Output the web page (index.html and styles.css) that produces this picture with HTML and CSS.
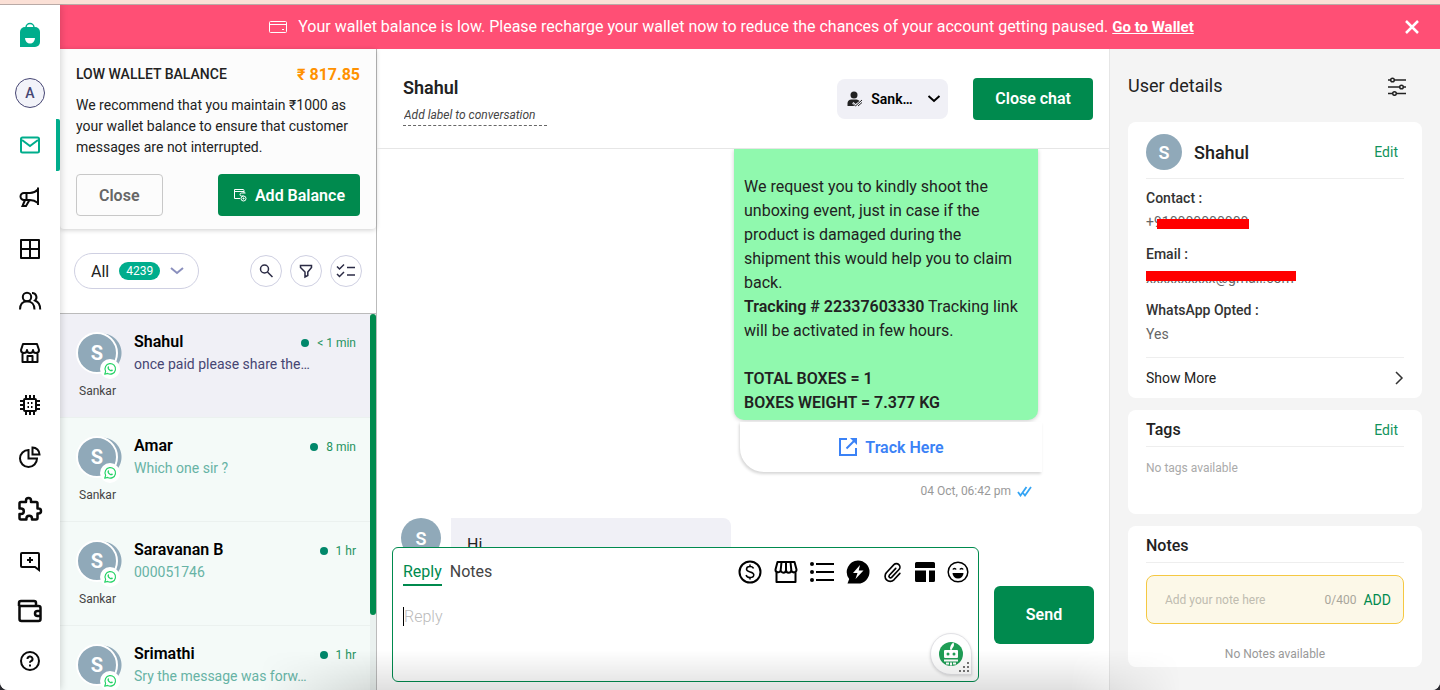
FILE: index.html
```
<!DOCTYPE html>
<html lang="en">
<head>
  <meta charset="UTF-8">
  <meta name="viewport" content="width=device-width, initial-scale=1.0">
  <title>Inbox</title>
  <link rel="stylesheet" href="styles.css">
</head>
<body>
  <svg width="0" height="0" class="sprite" aria-hidden="true">
    <symbol id="whatsapp" viewBox="0 0 24 24">
      <path d="M3 21l1.500-5A9 9 0 1 1 8 19.600z" fill="none" stroke="#25d366" stroke-width="2" stroke-linejoin="round"/>
      <path d="M8.500 7.500c1-.9 1.500-.2 2 1.200.3.800-.9 1.300-.5 2 .9 1.500 1.800 2.300 3.300 3 .8.300 1.200-1.200 2-.8 1.700.8 2 1.100 1.200 2.200-1.200 1.500-3.500 1-5.700-.6-2.300-1.800-4.300-4.800-2.300-7z" fill="#25d366"/>
    </symbol>
  </svg>

  <div class="app">
    <nav class="rail">
      <a class="logo" href="#" aria-label="Home">
        <svg width="22" height="26" viewBox="0 0 22 26">
          <path d="M7 6.500V5.500a4 4 0 0 1 8 0v1" fill="none" stroke="#00ad8c" stroke-width="1.500"/>
          <path d="M1 25V10a5 5 0 0 1 5-5h10a5 5 0 0 1 5 5v10a5 5 0 0 1-5 5z" fill="#00ad8c"/>
          <path d="M6 16h10a5 5.500 0 0 1-10 0z" fill="#fff"/>
        </svg>
      </a>
      <button class="rail-item" aria-label="Account"><span class="account">A</span></button>
      <button class="rail-item active" aria-label="Inbox">
        <svg width="24" height="24" viewBox="0 0 24 24"><rect x="3" y="4.500" width="18" height="15" rx="1.500"/><path d="M4 7l8 6 8-6"/></svg>
      </button>
      <button class="rail-item" aria-label="Campaigns">
        <svg width="24" height="24" viewBox="0 0 24 24"><path d="M20 2.500v17.500M20 4.500c-2.500 2.500-5 3.500-8 3.500H6a2.500 2.500 0 0 0 0 7h6c3 0 5.500 1 8 3M8.500 8v7M7 15l-2.500 6h3.500l3.500-6"/></svg>
      </button>
      <button class="rail-item" aria-label="Dashboard">
        <svg width="24" height="24" viewBox="0 0 24 24"><path d="M3 3h18v18H3zM12 3v18M3 12h18" stroke-linejoin="round"/></svg>
      </button>
      <button class="rail-item" aria-label="Contacts">
        <svg width="24" height="24" viewBox="0 0 24 24"><circle cx="9" cy="8" r="4.200"/><path d="M2 20.500c0-5 2.500-8.300 7-8.300s7.500 3.300 7.500 8.300M14 4a4.300 4.300 0 0 1 3 7.500c3.200 1.200 5.200 4.500 5.200 9"/></svg>
      </button>
      <button class="rail-item" aria-label="Store">
        <svg width="24" height="24" viewBox="0 0 24 24"><path d="M5 3h14l2 6a3 3 0 0 1-6 0 3 3 0 0 1-6 0 3 3 0 0 1-6 0zM4.500 12v9h15v-9M9.500 21v-6h5v6" stroke-linejoin="round"/></svg>
      </button>
      <button class="rail-item" aria-label="Automation">
        <svg width="24" height="24" viewBox="0 0 24 24"><rect x="6" y="6" width="12" height="12" rx="1"/><path d="M8 2v4M12 2v4M8 18v4M12 18v4M16 2v4M16 18v4M2 8h4M2 12h4M2 16h4M18 8h4M18 12h4M18 16h4M9.500 10h1.500M13 10h1.500M9.500 14h1.500M13 14h1.500"/></svg>
      </button>
      <button class="rail-item" aria-label="Reports">
        <svg width="24" height="24" viewBox="0 0 24 24"><path d="M10.500 5a8.500 8.500 0 1 0 8.500 8.500h-8.500zM14.500 2.500v7h7a7 7 0 0 0-7-7z"/></svg>
      </button>
      <button class="rail-item" aria-label="Integrations">
        <svg width="26" height="26" viewBox="0 0 26 26" stroke-linejoin="round"><path class="thick" d="M4 6h5V4.500a2.500 2.500 0 0 1 5 0V6h5a1.500 1.500 0 0 1 1.500 1.500v5h1a2.500 2.500 0 0 1 0 5h-1V22a1.500 1.500 0 0 1-1.500 1.500h-4v-1a2.800 2.800 0 0 0-5.600 0v1H4A1.500 1.500 0 0 1 2.500 22v-4H4a2.800 2.800 0 0 0 0-5.600H2.500V7.500A1.500 1.500 0 0 1 4 6z"/></svg>
      </button>
      <button class="rail-item" aria-label="Feedback">
        <svg width="24" height="24" viewBox="0 0 24 24"><path d="M3 5a1 1 0 0 1 1-1h16a1 1 0 0 1 1 1v16l-4-3H4a1 1 0 0 1-1-1zM12 8v6M9 11h6"/></svg>
      </button>
      <button class="rail-item short" aria-label="Wallet">
        <svg width="26" height="26" viewBox="0 0 26 26"><path class="thick" d="M2 8V5a2 2 0 0 1 2-2h13a2 2 0 0 1 2 2v3M2.500 8v13a2 2 0 0 0 2 2h17a2 2 0 0 0 2-2V10a2 2 0 0 0-2-2H2.500M24 13h-3.500a2.500 2.500 0 0 0 0 5H24"/></svg>
      </button>
      <button class="rail-item" aria-label="Help">
        <svg width="24" height="24" viewBox="0 0 24 24"><circle cx="12" cy="12" r="9"/><path d="M9.500 10a2.500 2.500 0 1 1 3.500 2.200c-.8.400-1 .8-1 1.600M12 15.500v2"/></svg>
      </button>
    </nav>

    <div class="workspace">
      <div class="banner">
        <svg width="20" height="14" viewBox="0 0 20 14" fill="none" stroke="#fff"><rect x="1.500" y="1.500" width="17" height="11" rx="1"/><path d="M1.500 4.500h17M14 9.500h2"/></svg>
        <p>Your wallet balance is low. Please recharge your wallet now to reduce the chances of your account getting paused. <a href="#">Go to Wallet</a></p>
        <button class="banner-close" aria-label="Dismiss">
          <svg width="16" height="16" viewBox="0 0 16 16" stroke="#fff" stroke-width="2.500"><path d="M2 2l12 12M14 2L2 14"/></svg>
        </button>
      </div>

      <div class="panels">
        <aside class="inbox">
          <section class="wallet">
            <div class="wallet-head">
              <h2>LOW WALLET BALANCE</h2>
              <strong>₹ 817.85</strong>
            </div>
            <p>We recommend that you maintain ₹1000 as your wallet balance to ensure that customer messages are not interrupted.</p>
            <div class="wallet-actions">
              <button class="btn-outline">Close</button>
              <button class="btn">
                <svg width="14" height="14" viewBox="0 0 14 14" fill="none" stroke="#fff"><path d="M11 5V2.500a1 1 0 0 0-1-1H1.500v9H7M1.500 3.500H11M12.500 5H8.500a1.500 1.500 0 0 0 0 3h2"/><circle cx="10.500" cy="10.500" r="2.500"/><path d="M10.500 9.500v2M9.500 10.500h2"/></svg>
                Add Balance
              </button>
            </div>
          </section>

          <div class="filters">
            <button class="filter-pill">All <span class="count">4239</span>
              <svg width="14" height="8" viewBox="0 0 14 8" fill="none" stroke="#8a8fbd" stroke-width="2"><path d="M1 1l6 5 6-5"/></svg>
            </button>
            <div class="filter-tools">
              <button class="round" aria-label="Search">
                <svg width="16" height="16" viewBox="0 0 16 16"><circle cx="6.500" cy="6" r="4"/><path d="M9.500 9l5 5"/></svg>
              </button>
              <button class="round" aria-label="Filter">
                <svg width="16" height="16" viewBox="0 0 16 16"><path d="M2.500 2.500h11v2L9.800 9v3.500L7 14V9L2.500 4.500z"/></svg>
              </button>
              <button class="round" aria-label="Select chats">
                <svg width="20" height="16" viewBox="0 0 20 16"><path d="M1 3.500l2.500 2.500L8 1.500M1 11l2.500 2.500L8 9M11 4.500h8M11 12h8"/></svg>
              </button>
            </div>
          </div>

          <div class="list-wrap">
            <ul class="chat-list">
              <li class="chat-item selected">
                <div class="who">
                  <div class="face"><span>S</span><i><svg width="14" height="14"><use href="#whatsapp"/></svg></i></div>
                  <small>Sankar</small>
                </div>
                <div class="summary">
                  <h3>Shahul</h3>
                  <time>&lt; 1 min</time>
                  <p>once paid please share the…</p>
                </div>
              </li>
              <li class="chat-item">
                <div class="who">
                  <div class="face"><span>S</span><i><svg width="14" height="14"><use href="#whatsapp"/></svg></i></div>
                  <small>Sankar</small>
                </div>
                <div class="summary">
                  <h3>Amar</h3>
                  <time>8 min</time>
                  <p>Which one sir ?</p>
                </div>
              </li>
              <li class="chat-item">
                <div class="who">
                  <div class="face"><span>S</span><i><svg width="14" height="14"><use href="#whatsapp"/></svg></i></div>
                  <small>Sankar</small>
                </div>
                <div class="summary">
                  <h3>Saravanan B</h3>
                  <time>1 hr</time>
                  <p>000051746</p>
                </div>
              </li>
              <li class="chat-item">
                <div class="who">
                  <div class="face"><span>S</span><i><svg width="14" height="14"><use href="#whatsapp"/></svg></i></div>
                </div>
                <div class="summary">
                  <h3>Srimathi</h3>
                  <time>1 hr</time>
                  <p>Sry the message was forw…</p>
                </div>
              </li>
            </ul>
            <div class="scroll-track"><div class="scroll-thumb"></div></div>
          </div>
        </aside>

        <main class="chat">
          <header class="chat-head">
            <div class="chat-title">
              <h1>Shahul</h1>
              <input type="text" placeholder="Add label to conversation" aria-label="Conversation label">
            </div>
            <label class="assignee">
              <svg width="16" height="16" viewBox="0 0 16 16"><circle cx="7" cy="4" r="3.500" fill="#222"/><path d="M.5 15v-3a4 4 0 0 1 4-3.500h5a4 4 0 0 1 3 1.500l-4 3-2-2-1.500 1.500 2.500 2.500z" fill="#222"/><path d="M6 12.500l2.500 2.500 6.500-6M11 15l4-3.500" fill="none" stroke="#222"/></svg>
              <select aria-label="Assignee"><option>Sank…</option></select>
              <svg width="14" height="10" viewBox="0 0 14 10" fill="none" stroke="#000" stroke-width="2"><path d="M1.500 2L7 7l5.500-5"/></svg>
            </label>
            <button class="btn close-chat">Close chat</button>
          </header>

          <div class="messages">
            <div class="outgoing">
              <div class="bubble">
                <br>
                We request you to kindly shoot the unboxing event, just in case if the product is damaged during the shipment this would help you to claim back.<br>
                <b>Tracking # 22337603330</b> Tracking link will be activated in few hours.<br>
                <br>
                <b>TOTAL BOXES = 1<br>BOXES WEIGHT = 7.377 KG</b>
              </div>
              <a class="track" href="#">
                <svg width="20" height="20" viewBox="0 0 20 20" fill="none" stroke="#3b82f6" stroke-width="2"><path d="M9 2H2v16h16v-7M8.500 11.500l8-8"/><path d="M12 1h7v7z" fill="#3b82f6" stroke="none"/></svg>
                Track Here
              </a>
              <div class="stamp">04 Oct, 06:42 pm
                <svg width="15" height="12" viewBox="0 0 15 12" fill="none" stroke="#34a4f4" stroke-width="1.800"><path d="M1 7l2.500 3.500L9.500 2M6 8l2 2.500L14 2"/></svg>
              </div>
            </div>
            <div class="incoming">
              <span class="avatar">S</span>
              <div class="in-bubble">Hi</div>
            </div>
          </div>

          <div class="composer">
            <div class="editor">
              <div class="editor-bar">
                <button class="tab current">Reply</button>
                <button class="tab">Notes</button>
                <div class="tools">
                  <button aria-label="Payment">
                    <svg width="24" height="24" viewBox="0 0 24 24" fill="none" stroke="#000" stroke-width="2"><circle cx="12" cy="12" r="10.500"/><path d="M15.500 8.500c-.5-1.500-1.800-2-3.500-2-2 0-3.500 1-3.500 2.700 0 3.600 7.300 1.800 7.300 5.500 0 1.800-1.800 2.800-3.800 2.800s-3.500-.8-3.900-2.500M12 4.500v2.500M12 17v2.500" stroke-width="1.500"/></svg>
                  </button>
                  <button aria-label="Catalogue">
                    <svg width="24" height="24" viewBox="0 0 24 24" fill="none" stroke="#000" stroke-width="2" stroke-linejoin="round"><path d="M3.500 2h17l2 7.500a2.600 2.600 0 0 1-5.200.5 2.600 2.600 0 0 1-5.300 0 2.600 2.600 0 0 1-5.300 0 2.600 2.600 0 0 1-5.200-.5zM7.500 2l-.8 8M12 2v8M16.500 2l.8 8M2.500 12v10h19V12"/></svg>
                  </button>
                  <button aria-label="List">
                    <svg width="24" height="24" viewBox="0 0 24 24" fill="#000"><circle cx="2" cy="4" r="2"/><circle cx="2" cy="12" r="2"/><circle cx="2" cy="20" r="2"/><path d="M6 3h18v2H6zM6 11h18v2H6zM6 19h18v2H6z"/></svg>
                  </button>
                  <button aria-label="Quick replies">
                    <svg width="24" height="24" viewBox="0 0 24 24"><path d="M12 .5A11.500 11.500 0 1 1 12 23.500H1.500l1.700-4.500A11.500 11.500 0 0 1 12 .5z" fill="#000"/><path d="M14 5L7 13h4.500L9.500 19l8-8.500h-4.800z" fill="#fff"/></svg>
                  </button>
                  <button aria-label="Attach">
                    <svg width="22" height="24" viewBox="1 0 24 24" fill="none" stroke="#000" stroke-width="1.800" stroke-linecap="round"><path d="M16 8l-7 7.500a1.700 1.700 0 0 0 2.500 2.300l8-8.500a3.800 3.800 0 0 0-5.500-5.300l-8 8.500a5.600 5.600 0 0 0 8 8l6.500-7"/></svg>
                  </button>
                  <button aria-label="Template">
                    <svg width="24" height="24" viewBox="0 0 24 24" fill="#000"><path d="M3.500 2h17a1.500 1.500 0 0 1 1.500 1.500V8H2V3.500A1.500 1.500 0 0 1 3.500 2zM2 10.500h11V22H3.500A1.500 1.500 0 0 1 2 20.500zM16 10.500h6v10a1.500 1.500 0 0 1-1.500 1.500H16z"/></svg>
                  </button>
                  <button aria-label="Emoji">
                    <svg width="24" height="24" viewBox="0 0 24 24"><circle cx="12" cy="12" r="9.800" fill="none" stroke="#000" stroke-width="1.500"/><path d="M6.500 13h11a5.500 5.500 0 0 1-11 0z"/><path d="M7 9.500c.5-1.500 2.500-1.500 3 0M14 9.500c.5-1.500 2.500-1.500 3 0" fill="none" stroke="#000" stroke-width="1.500"/></svg>
                  </button>
                </div>
              </div>
              <div class="reply-row">
                <textarea placeholder="Reply" aria-label="Reply"></textarea>
              </div>
              <button class="bot" aria-label="Writing assistant">
                <svg width="26" height="26" viewBox="0 0 26 26"><circle cx="13" cy="13" r="12" fill="#1f9d55"/><path d="M12 8.500c0-3 1-5.500 3.500-7 1 2 .5 4-1 5.500L13.500 9z" fill="#fff"/><rect x="6" y="9" width="14" height="8" rx="1" fill="#fff"/><circle cx="10" cy="13" r="1.500" fill="#1f9d55"/><circle cx="16" cy="13" r="1.500" fill="#1f9d55"/><path d="M6 18.500h14v2H6zM8 21.500h3v2H8zM12 21.500h2v3h-2zM15 21.500h3v2h-3z" fill="#fff"/></svg>
                <svg class="grip" width="10" height="10" viewBox="0 0 10 10" fill="#777"><path d="M8 0h2v2H8zM4 4h2v2H4zM8 4h2v2H8zM0 8h2v2H0zM4 8h2v2H4zM8 8h2v2H8z"/></svg>
              </button>
            </div>
            <button class="btn send">Send</button>
          </div>
        </main>

        <aside class="details">
          <div class="details-head">
            <h2>User details</h2>
            <button aria-label="Customise">
              <svg width="18" height="20" viewBox="0 0 18 20" fill="#f4f4f4" stroke="#222" stroke-width="1.500"><path d="M0 4h18M0 11h18M0 17.500h18"/><circle cx="4.500" cy="4" r="1.800"/><circle cx="13.500" cy="11" r="1.800"/><circle cx="6.500" cy="17.500" r="1.800"/></svg>
            </button>
          </div>

          <section class="card">
            <div class="profile">
              <span class="avatar">S</span>
              <h3>Shahul</h3>
              <a href="#">Edit</a>
            </div>
            <dl>
              <dt>Contact :</dt>
              <dd><span class="masked phone">+910000000000</span></dd>
              <dt>Email :</dt>
              <dd><span class="masked email">xxxxxxxxxx@gmail.com</span></dd>
              <dt>WhatsApp Opted :</dt>
              <dd>Yes</dd>
            </dl>
            <button class="show-more">Show More
              <svg width="10" height="14" viewBox="0 0 10 14" fill="none" stroke="#333" stroke-width="1.500"><path d="M2 1l6 6-6 6"/></svg>
            </button>
          </section>

          <section class="card tags">
            <div class="card-head"><h3>Tags</h3><a href="#">Edit</a></div>
            <p>No tags available</p>
          </section>

          <section class="card notes">
            <div class="card-head"><h3>Notes</h3></div>
            <div class="note-box">
              <input type="text" placeholder="Add your note here" aria-label="Note">
              <span>0/400</span>
              <button>ADD</button>
            </div>
            <p>No Notes available</p>
          </section>
        </aside>
      </div>
    </div>
    <div class="dock-shadow"></div>
  </div>
</body>
</html>
```
FILE: styles.css
```
:root {
  --green: #008a4e;
  --teal: #00ad8c;
  --pink: #ff4f75;
  --avatar: #90a9b9;
  --lavender: #f0f0f6;
  --text: #222;
}

* {
  margin: 0;
  padding: 0;
  box-sizing: border-box;
}

html, body {
  height: 100%;
  overflow: hidden;
}

body {
  background: #2a2a30;
  color: var(--text);
  font-family: Roboto, "Noto Sans", sans-serif;
  font-size: 14px;
}

button, input, select, textarea {
  font: inherit;
  color: inherit;
  border: none;
  outline: none;
  background: none;
}

button {
  cursor: pointer;
}

svg {
  display: block;
  flex: none;
}

ul {
  list-style: none;
}

.sprite {
  position: absolute;
}

.app {
  position: relative;
  display: flex;
  height: 100vh;
  border-top: 4px solid #fbe0d6;
  border-bottom-left-radius: 8px;
  border-bottom-right-radius: 8px;
  background: #fff;
  overflow: hidden;
}

/* icon rail */
.rail {
  width: 60px;
  flex: none;
  display: flex;
  flex-direction: column;
  border-top: 1px solid #b9aaa6;
  background: #fff;
  box-shadow: 0 0 8px rgba(0, 0, 0, 0.2);
  z-index: 1;
}

.logo {
  height: 62px;
  display: grid;
  place-items: center;
  padding-bottom: 2px;
}

.rail-item {
  height: 52px;
  flex: none;
  display: grid;
  place-items: center;
}

.rail-item.short {
  height: 48px;
}

.rail-item svg {
  fill: none;
  stroke: #0a0a0a;
  stroke-width: 2;
}

.rail-item .thick {
  stroke-width: 2.5;
}

.rail-item.active {
  border-right: 4px solid var(--teal);
  border-radius: 2px;
  padding-left: 4px;
}

.rail-item.active svg {
  stroke: var(--teal);
}

.account {
  width: 30px;
  height: 30px;
  display: grid;
  place-items: center;
  border: 1px solid #464673;
  border-radius: 50%;
  background: #f2f3f9;
  color: #464673;
  font-weight: 500;
}

.workspace {
  flex: 1;
  min-width: 0;
  display: flex;
  flex-direction: column;
  border-top: 1px solid #b9aaa6;
}

.banner {
  height: 44px;
  flex: none;
  display: flex;
  align-items: center;
  gap: 10px;
  padding: 0 20px 0 8px;
  background: var(--pink);
  color: #fff;
  font-size: 16px;
}

.banner > svg {
  margin-left: auto;
}

.banner p {
  padding-bottom: 1px;
}

.banner a {
  color: #fff;
  font-size: 15px;
  font-weight: 700;
}

.banner-close {
  margin-left: auto;
}

.panels {
  flex: 1;
  min-height: 0;
  display: flex;
}

.btn, .btn-outline {
  height: 42px;
  display: flex;
  align-items: center;
  justify-content: center;
  gap: 8px;
  border-radius: 4px;
  font-size: 16px;
  font-weight: 600;
}

.btn {
  padding: 0 15px;
  background: var(--green);
  color: #fff;
}

.btn-outline {
  padding: 0 22px;
  border: 1px solid #c8c8c8;
  color: #666;
}

/* conversation list */
.inbox {
  width: 317px;
  flex: none;
  display: flex;
  flex-direction: column;
  border-right: 1px solid #bbb;
}

.wallet {
  padding: 15px 16px 13px;
  border-radius: 0 0 4px 4px;
  background: #fcfcfc;
  box-shadow: 0 1px 5px rgba(0, 0, 0, 0.2);
  line-height: 21px;
}

.wallet-head {
  display: flex;
  justify-content: space-between;
  margin-bottom: 10px;
}

.wallet-head h2 {
  font-size: 14px;
  font-weight: 500;
}

.wallet-head strong {
  color: #ff9100;
  font-size: 16px;
}

.wallet-actions {
  display: flex;
  justify-content: space-between;
  margin-top: 16px;
}

.filters {
  height: 85px;
  flex: none;
  display: flex;
  align-items: center;
  justify-content: space-between;
  padding: 0 14px;
  border-bottom: 1px solid #bbb;
}

.filter-pill {
  height: 36px;
  display: flex;
  align-items: center;
  gap: 10px;
  padding: 0 14px 0 16px;
  border: 1px solid #cfd0e2;
  border-radius: 18px;
  font-size: 16px;
}

.count {
  padding: 0 7px;
  border-radius: 9px;
  background: var(--teal);
  color: #fff;
  font-size: 12px;
  line-height: 18px;
}

.filter-tools {
  display: flex;
  gap: 8px;
}

.round {
  width: 32px;
  height: 32px;
  display: grid;
  place-items: center;
  border: 1px solid #cfd0e2;
  border-radius: 50%;
}

.round svg {
  fill: none;
  stroke: #2b2b45;
  stroke-width: 1.5;
}

.list-wrap {
  flex: 1;
  min-height: 0;
  display: flex;
}

.chat-list {
  flex: 1;
  min-width: 0;
  overflow: hidden;
}

.chat-item {
  height: 104px;
  display: flex;
  padding: 16px 14px 0 16px;
  border-bottom: 1px solid #ebf1ef;
  background: #f4faf8;
}

.chat-item.selected {
  background: var(--lavender);
}

.who {
  width: 58px;
  flex: none;
  padding-top: 2px;
}

.who small {
  display: block;
  margin: 9px 3px 0;
  color: #444;
  font-size: 12px;
  line-height: 16px;
}

.face {
  position: relative;
  width: 46px;
  height: 42px;
  padding-right: 4px;
  background: radial-gradient(circle at 26px 21px, var(--avatar) 19px, transparent 20px);
}

.face span {
  width: 42px;
  height: 42px;
  display: grid;
  place-items: center;
  border: 2px solid #fff;
  border-radius: 50%;
  background: var(--avatar);
  color: #fff;
  font-size: 20px;
  font-weight: 700;
}

/* channel badge over the avatar */
.face i {
  position: absolute;
  right: 2px;
  bottom: -5px;
  width: 20px;
  height: 20px;
  display: grid;
  place-items: center;
  border-radius: 50%;
  background: #fff;
}

.summary {
  flex: 1;
  min-width: 0;
  display: grid;
  grid-template-columns: 1fr auto;
  align-content: start;
}

.summary h3 {
  color: #000;
  font-size: 16px;
  font-weight: 600;
  line-height: 24px;
}

.summary time {
  display: flex;
  align-items: center;
  gap: 8px;
  color: #1f9360;
  font-size: 12px;
  height: 24px;
  padding-top: 2px;
}

.summary time::before {
  content: "";
  width: 8px;
  height: 8px;
  border-radius: 50%;
  background: #00876a;
}

.summary p {
  grid-column: 1 / -1;
  color: #67b3a5;
  line-height: 21px;
}

.selected .summary p {
  color: #464673;
}

.scroll-track {
  width: 6px;
  flex: none;
  background: #eaf1ef;
}

.scroll-thumb {
  height: 80%;
  border-radius: 3px;
  background: var(--green);
}

/* conversation */
.chat {
  flex: 1;
  min-width: 0;
  display: flex;
  flex-direction: column;
}

.chat-head {
  height: 100px;
  flex: none;
  display: flex;
  align-items: center;
  gap: 25px;
  padding: 0 16px 0 26px;
  border-bottom: 1px solid #e6e6e6;
}

.chat-title {
  width: 144px;
  margin-right: auto;
  padding-top: 4px;
}

.chat-title h1 {
  font-size: 18px;
  font-weight: 600;
  line-height: 24px;
}

.chat-title input {
  width: 100%;
  height: 26px;
  padding: 6px 9px 0 1px;
  border-bottom: 1px dashed #666;
  font-size: 12px;
  font-style: italic;
}

.chat-title input::placeholder {
  color: #444;
}

.assignee {
  height: 40px;
  display: flex;
  align-items: center;
  gap: 8px;
  padding: 0 7px 0 10px;
  border-radius: 8px;
  background: var(--lavender);
}

.assignee select {
  width: 48px;
  appearance: none;
  color: #000;
  font-weight: 600;
}

.close-chat {
  padding: 0 22px;
}

.messages {
  flex: 1;
  min-height: 0;
  padding: 0 24px;
  overflow: hidden;
}

.outgoing {
  display: flex;
  flex-direction: column;
  align-items: flex-end;
  padding-right: 43px;
}

.bubble {
  width: 304px;
  margin-right: 4px;
  padding: 2px 10px 5px;
  border-radius: 0 0 10px 10px;
  background: #90f9ae;
  box-shadow: 0 1px 4px rgba(0, 0, 0, 0.2);
  font-size: 16px;
  line-height: 24px;
}

.bubble b {
  font-weight: 600;
}

.track {
  width: 302px;
  height: 50px;
  display: flex;
  align-items: center;
  justify-content: center;
  gap: 7px;
  margin-top: 2px;
  border-bottom-left-radius: 24px;
  background: #fff;
  box-shadow: -1px 2px 3px rgba(0, 0, 0, 0.16);
  color: #3b82f6;
  font-size: 16px;
  font-weight: 600;
  text-decoration: none;
}

.stamp {
  display: flex;
  align-items: center;
  gap: 6px;
  margin: 11px 10px 0 0;
  color: #999;
  font-size: 12px;
  line-height: 16px;
}

.incoming {
  display: flex;
  gap: 10px;
  margin-top: 19px;
}

.avatar {
  width: 40px;
  height: 40px;
  flex: none;
  display: grid;
  place-items: center;
  border-radius: 50%;
  background: var(--avatar);
  color: #fff;
  font-size: 18px;
  font-weight: 600;
}

.in-bubble {
  width: 280px;
  height: 60px;
  padding: 15px 16px;
  border-radius: 0 8px 8px 8px;
  background: var(--lavender);
  font-size: 16px;
  line-height: 24px;
}

.composer {
  flex: none;
  display: flex;
  align-items: center;
  gap: 15px;
  padding: 0 15px 8px;
}

.editor {
  position: relative;
  flex: 1;
  height: 135px;
  display: flex;
  flex-direction: column;
  padding: 10px 8px 10px 10px;
  border: 1px solid var(--green);
  border-radius: 6px;
}

.editor-bar {
  display: flex;
  align-items: center;
  gap: 8px;
  height: 28px;
  font-size: 16px;
}

.tab {
  height: 28px;
  border-bottom: 2px solid transparent;
  color: #444;
}

.tab.current {
  border-bottom-color: var(--green);
  color: var(--green);
}

.tools {
  display: flex;
  gap: 12px;
  margin-left: auto;
}

.tools button:nth-last-child(-n+2) {
  margin-left: -3px;
}

.reply-row {
  flex: 1;
  display: flex;
  margin-top: 21px;
}

.reply-row::before {
  content: "";
  width: 1px;
  height: 19px;
  background: #000;
}

.reply-row textarea {
  flex: 1;
  resize: none;
  font-size: 16px;
}

.reply-row textarea::placeholder {
  color: #bbb;
  font-weight: 300;
}

/* floating assistant button */
.bot {
  position: absolute;
  right: 6px;
  bottom: 6px;
  width: 42px;
  height: 42px;
  display: grid;
  place-items: center;
  border: 1px solid #e2e2e6;
  border-radius: 50% 50% 0 50%;
  background: #fff;
  box-shadow: 0 1px 3px rgba(0, 0, 0, 0.15);
}

.grip {
  position: absolute;
  right: 2px;
  bottom: 2px;
}

.send {
  width: 100px;
  height: 58px;
  border-radius: 6px;
}

/* user details */
.details {
  width: 331px;
  flex: none;
  padding: 0 18px;
  border-left: 1px solid #e6e6e6;
  background: #f4f4f4;
}

.details-head {
  height: 73px;
  display: flex;
  align-items: center;
  justify-content: space-between;
  padding-right: 16px;
}

.details-head h2 {
  font-size: 18px;
  font-weight: 400;
}

.details a {
  color: #12935c;
  text-decoration: none;
}

.card {
  margin-bottom: 12px;
  padding: 0 18px;
  border-radius: 8px;
  background: #fff;
}

.profile {
  height: 57px;
  display: flex;
  align-items: center;
  gap: 12px;
  padding: 4px 6px 0 0;
  border-bottom: 1px solid #eee;
}

.profile .avatar {
  width: 36px;
  height: 36px;
}

.profile h3 {
  flex: 1;
  font-size: 18px;
  font-weight: 500;
}

dl {
  padding: 7px 0 3px;
  line-height: 24px;
}

dt {
  color: #333;
  font-weight: 500;
}

dd {
  margin-bottom: 8px;
  color: #666;
}

.masked {
  position: relative;
}

/* bar laid over private values */
.masked::after {
  content: "";
  position: absolute;
  left: 0;
  top: 1px;
  width: 150px;
  height: 10px;
  background: #f00;
}

.phone::after {
  left: 11px;
  top: 5px;
  width: 92px;
}

.show-more {
  width: 100%;
  height: 41px;
  display: flex;
  align-items: center;
  justify-content: space-between;
  border-top: 1px solid #eee;
}

.card-head {
  height: 37px;
  display: flex;
  align-items: center;
  justify-content: space-between;
  padding: 3px 6px 0 0;
  border-bottom: 1px solid #eee;
}

.card-head h3 {
  font-size: 16px;
  font-weight: 500;
}

.card p {
  color: #aaa;
  font-size: 12px;
  line-height: 20px;
}

.tags {
  height: 104px;
}

.tags p {
  margin-top: 11px;
}

.note-box {
  height: 49px;
  display: flex;
  align-items: center;
  gap: 7px;
  margin: 12px 0 20px;
  padding: 0 12px 0 18px;
  border: 1px solid #f5c842;
  border-radius: 8px;
  background: #fcf8e8;
}

.note-box input {
  flex: 1;
  min-width: 0;
  font-size: 12px;
}

.note-box input::placeholder {
  color: #bfbcb0;
}

.note-box span {
  color: #a9a69b;
  font-size: 12px;
}

.note-box button {
  color: var(--green);
}

.notes p {
  padding-bottom: 3px;
  color: #999;
  text-align: center;
}

.dock-shadow {
  position: absolute;
  left: 18%;
  right: 18%;
  bottom: 0;
  height: 40px;
  z-index: 2;
  background: linear-gradient(transparent, rgba(0, 0, 0, 0.12));
  mask-image: linear-gradient(90deg, transparent, #000 12%, #000 88%, transparent);
  pointer-events: none;
}
```
